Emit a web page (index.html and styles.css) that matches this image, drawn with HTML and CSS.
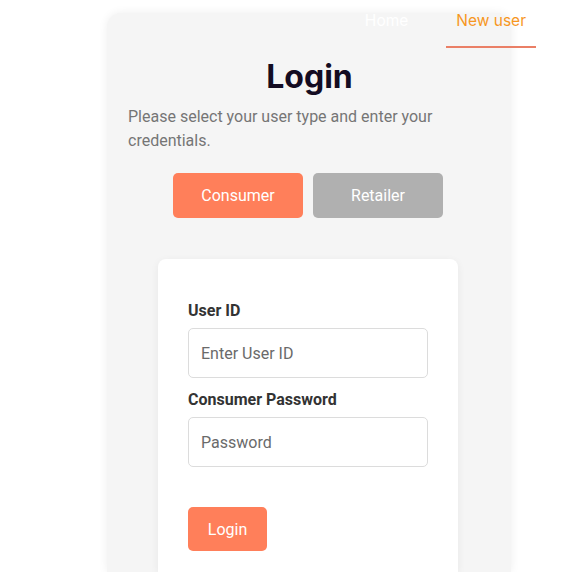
FILE: index.html
```html
<!DOCTYPE html>
<html lang="en">
<head>
<meta charset="utf-8">
<title>Login</title>
<link rel="stylesheet" href="styles.css">
</head>
<body>
<nav class="topnav">
  <a class="nav-link" href="#">Home</a>
  <a class="nav-link active" href="#">New user</a>
</nav>
<main class="page">
  <section class="login-card">
    <h1 class="title">Login</h1>
    <p class="intro">Please select your user type and enter your credentials.</p>
    <div class="type-switch">
      <button class="type-btn selected" type="button">Consumer</button>
      <button class="type-btn" type="button">Retailer</button>
    </div>
    <form class="form-card">
      <label class="field-label" for="uid">User ID</label>
      <input class="field-input" id="uid" type="text" placeholder="Enter User ID">
      <label class="field-label second" for="pwd">Consumer Password</label>
      <input class="field-input" id="pwd" type="password" placeholder="Password">
      <button class="submit-btn" type="button">Login</button>
    </form>
  </section>
</main>
</body>
</html>
```
FILE: styles.css
```css
* { box-sizing: border-box; }
html, body { margin: 0; padding: 0; background: #ffffff; }
body {
  font-family: Roboto, "Liberation Sans", sans-serif;
  width: 588px;
  height: 572px;
  overflow: hidden;
  position: relative;
}
.topnav {
  position: absolute;
  top: 0;
  right: 52px;
  display: flex;
  gap: 28px;
  z-index: 2;
}
.nav-link {
  font-family: Inter, "Open Sans", sans-serif;
  font-size: 15.5px;
  line-height: 24px;
  padding: 9px 10px 13px;
  text-decoration: none;
  color: #ffffff;
  border-bottom: 2px solid transparent;
}
.nav-link.active {
  color: #f7971e;
  border-bottom-color: #ea7f66;
}
.page {
  padding-top: 13px;
  padding-left: 107px;
}
.login-card {
  width: 404px;
  height: 559px;
  background: #f5f5f5;
  border-radius: 14px 14px 0 0;
  box-shadow: 0 0 10px rgba(0, 0, 0, 0.07);
  padding: 44px 20px 0 21px;
  display: flex;
  flex-direction: column;
}
.title {
  margin: 0;
  font-family: Inter, "Open Sans", sans-serif;
  font-weight: 700;
  font-size: 32px;
  line-height: 40px;
  color: #140c22;
  text-align: center;
}
.intro {
  margin: 8px 0 0;
  font-size: 16px;
  line-height: 24px;
  color: #757575;
}
.type-switch {
  margin-top: 20px;
  display: flex;
  gap: 10px;
  padding-left: 45px;
}
.type-btn {
  width: 130px;
  height: 45px;
  border: none;
  border-radius: 5px;
  background: #b0b0b0;
  color: #ffffff;
  font-family: Roboto, "Liberation Sans", sans-serif;
  font-size: 16px;
}
.type-btn.selected { background: #ff7f5a; }
.form-card {
  margin: 41px 0 0 30px;
  width: 300px;
  flex: 1;
  background: #ffffff;
  border-radius: 8px 8px 0 0;
  box-shadow: 0 2px 8px rgba(0, 0, 0, 0.06);
  padding: 40px 30px 0;
  display: flex;
  flex-direction: column;
  align-items: flex-start;
}
.field-label {
  font-size: 16px;
  line-height: 24px;
  font-weight: 700;
  color: #333333;
}
.field-label.second { margin-top: 10px; }
.field-input {
  margin-top: 5px;
  width: 240px;
  height: 50px;
  border: 1px solid #dcdcdc;
  border-radius: 5px;
  padding: 0 12px;
  font-family: Roboto, "Liberation Sans", sans-serif;
  font-size: 16px;
  color: #333;
  background: #fff;
}
.field-input::placeholder { color: #6a6a6a; }
.submit-btn {
  margin-top: 40px;
  width: 79px;
  height: 44px;
  border: none;
  border-radius: 5px;
  background: #ff7f5a;
  color: #ffffff;
  font-family: Roboto, "Liberation Sans", sans-serif;
  font-size: 16px;
}
```
